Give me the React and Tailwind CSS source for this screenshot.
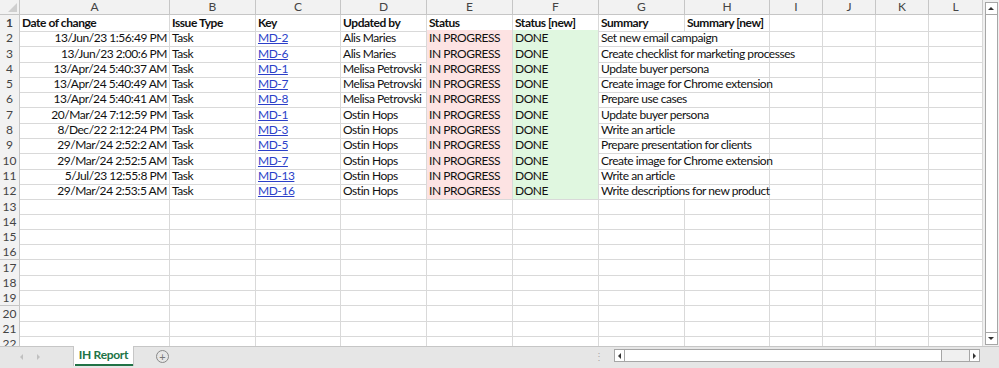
import React from 'react';

const cols = ['A', 'B', 'C', 'D', 'E', 'F', 'G', 'H', 'I', 'J', 'K', 'L'];
const gridCols = 'grid grid-cols-[20px_150px_86px_85px_86px_86px_86px_86px_85px_53px_53px_53px_54px]';

const rows = [
  ['13/Jun/23 1:56:49 PM', 'Task', 'MD-2', 'Alis Maries', 'Set new email campaign'],
  ['13/Jun/23 2:00:6 PM', 'Task', 'MD-6', 'Alis Maries', 'Create checklist for marketing processes'],
  ['13/Apr/24 5:40:37 AM', 'Task', 'MD-1', 'Melisa Petrovski', 'Update buyer persona'],
  ['13/Apr/24 5:40:49 AM', 'Task', 'MD-7', 'Melisa Petrovski', 'Create image for Chrome extension'],
  ['13/Apr/24 5:40:41 AM', 'Task', 'MD-8', 'Melisa Petrovski', 'Prepare use cases'],
  ['20/Mar/24 7:12:59 PM', 'Task', 'MD-1', 'Ostin Hops', 'Update buyer persona'],
  ['8/Dec/22 2:12:24 PM', 'Task', 'MD-3', 'Ostin Hops', 'Write an article'],
  ['29/Mar/24 2:52:2 AM', 'Task', 'MD-5', 'Ostin Hops', 'Prepare presentation for clients'],
  ['29/Mar/24 2:52:5 AM', 'Task', 'MD-7', 'Ostin Hops', 'Create image for Chrome extension'],
  ['5/Jul/23 12:55:8 PM', 'Task', 'MD-13', 'Ostin Hops', 'Write an article'],
  ['29/Mar/24 2:53:5 AM', 'Task', 'MD-16', 'Ostin Hops', 'Write descriptions for new product'],
];

// cell text is squeezed a little to get close to Calibri's narrow widths
const cell = 'border-r border-b border-[#d9d9d9] px-[2px] whitespace-nowrap overflow-visible leading-[16px] tracking-[-0.45px]';

const RowNum = ({ n }) => (
  <div className="bg-[#f2f2f2] border-r border-b border-[#c6c6c6] text-[#444] text-center leading-[15px]">{n}</div>
);

const App = () => {
  return (
    <div className="w-[999px] h-[368px] overflow-hidden bg-white flex flex-col text-[12px] text-[#111]" style={{ fontFamily: 'Lato, "Open Sans", sans-serif' }}>
      <div className="flex h-[346px]">
        <div className="flex-1 flex flex-col overflow-hidden">
          {/* column headers */}
          <div className={`${gridCols} h-[15px] shrink-0 bg-[#f2f2f2] text-[#444]`}>
            <div className="border-r border-b border-[#c6c6c6] relative">
              <div className="absolute right-[2px] bottom-[2px] w-0 h-0 border-l-[9px] border-l-transparent border-b-[9px] border-b-[#cfcfcf]"></div>
            </div>
            {cols.map(c => (
              <div key={c} className="border-r border-b border-[#c6c6c6] text-center leading-[14px]">{c}</div>
            ))}
          </div>
          {/* row 1 */}
          <div className={`${gridCols} h-[15.3px] shrink-0 font-bold`}>
            <RowNum n={1} />
            <div className={cell}>Date of change</div>
            <div className={cell}>Issue Type</div>
            <div className={cell}>Key</div>
            <div className={cell}>Updated by</div>
            <div className={cell}>Status</div>
            <div className={cell}>Status [new]</div>
            <div className={cell}>Summary</div>
            <div className={cell}>Summary [new]</div>
            <div className={cell}></div>
            <div className={cell}></div>
            <div className={cell}></div>
            <div className={cell}></div>
          </div>
          {rows.map((r, i) => (
            <div key={i} className={`${gridCols} h-[15.3px] shrink-0`}>
              <RowNum n={i + 2} />
              <div className={`${cell} text-right`}>{r[0]}</div>
              <div className={cell}>{r[1]}</div>
              <div className={cell}>
                <span className="text-[#2b3fc8] underline">{r[2]}</span>
              </div>
              <div className={cell}>{r[3]}</div>
              <div className={`${cell} bg-[#fde3e3]`}>IN PROGRESS</div>
              <div className={`${cell} bg-[#e0f7e0]`}>DONE</div>
              <div className={`${cell} col-span-2`}>{r[4]}</div>
              <div className={cell}></div>
              <div className={cell}></div>
              <div className={cell}></div>
              <div className={cell}></div>
            </div>
          ))}
          {Array.from({ length: 10 }, (_, i) => (
            <div key={i} className={`${gridCols} h-[15.3px] shrink-0`}>
              <RowNum n={i + 13} />
              {cols.map(c => (
                <div key={c} className={cell}></div>
              ))}
            </div>
          ))}
        </div>
        {/* vertical scrollbar */}
        <div className="w-[16px] bg-[#f0f0f0] flex flex-col items-center pt-[2px] pb-[1px]">
          <div className="w-[13px] h-[13px] border border-[#a6a6a6] bg-white flex items-center justify-center">
            <div className="w-0 h-0 border-l-[3px] border-r-[3px] border-b-[3px] border-l-transparent border-r-transparent border-b-[#333]"></div>
          </div>
          <div className="w-[13px] flex-1 bg-white border-x border-[#a6a6a6]"></div>
          <div className="w-[13px] h-[13px] border border-[#a6a6a6] bg-white flex items-center justify-center">
            <div className="w-0 h-0 border-l-[3px] border-r-[3px] border-t-[3px] border-l-transparent border-r-transparent border-t-[#333]"></div>
          </div>
        </div>
      </div>
      {/* sheet tabs bar */}
      <div className="flex-1 bg-[#e6e6e6] border-t border-[#c6c6c6] flex items-start">
        <div className="w-[73px] flex items-center gap-[14px] pl-[20px] pt-[7px]">
          <div className="w-0 h-0 border-t-[3px] border-b-[3px] border-r-[3px] border-t-transparent border-b-transparent border-r-[#c0c0c0]"></div>
          <div className="w-0 h-0 border-t-[3px] border-b-[3px] border-l-[3px] border-t-transparent border-b-transparent border-l-[#c0c0c0]"></div>
        </div>
        <div className="w-[61px] h-[20px] -mt-[1px] bg-white border-x border-[#c6c6c6] flex flex-col items-center">
          <div className="flex-1 text-[#217346] font-bold text-[12px] leading-[18px] tracking-[-0.3px]">IH Report</div>
          <div className="w-[58px] h-[2px] bg-[#217346]"></div>
        </div>
        <div className="ml-[22px] mt-[3px] w-[13px] h-[13px] rounded-full border border-[#888] flex items-center justify-center text-[#777] text-[11px] leading-none">+</div>
        <div className="ml-auto flex items-center mt-[2px] mr-[19px]">
          <div className="text-[#aaa] text-[10px] leading-none mr-[10px]">⋮</div>
          <div className="w-[366px] h-[13px] border border-[#a6a6a6] bg-[#f0f0f0] flex items-stretch">
            <div className="w-[10px] border-r border-[#a6a6a6] bg-white flex items-center justify-center">
              <div className="w-0 h-0 border-t-[3px] border-b-[3px] border-r-[3px] border-t-transparent border-b-transparent border-r-[#333]"></div>
            </div>
            <div className="w-[317px] bg-white border-r border-[#a6a6a6]"></div>
            <div className="flex-1"></div>
            <div className="w-[10px] border-l border-[#a6a6a6] bg-white flex items-center justify-center">
              <div className="w-0 h-0 border-t-[3px] border-b-[3px] border-l-[3px] border-t-transparent border-b-transparent border-l-[#333]"></div>
            </div>
          </div>
        </div>
      </div>
    </div>
  );
};

export default App;
